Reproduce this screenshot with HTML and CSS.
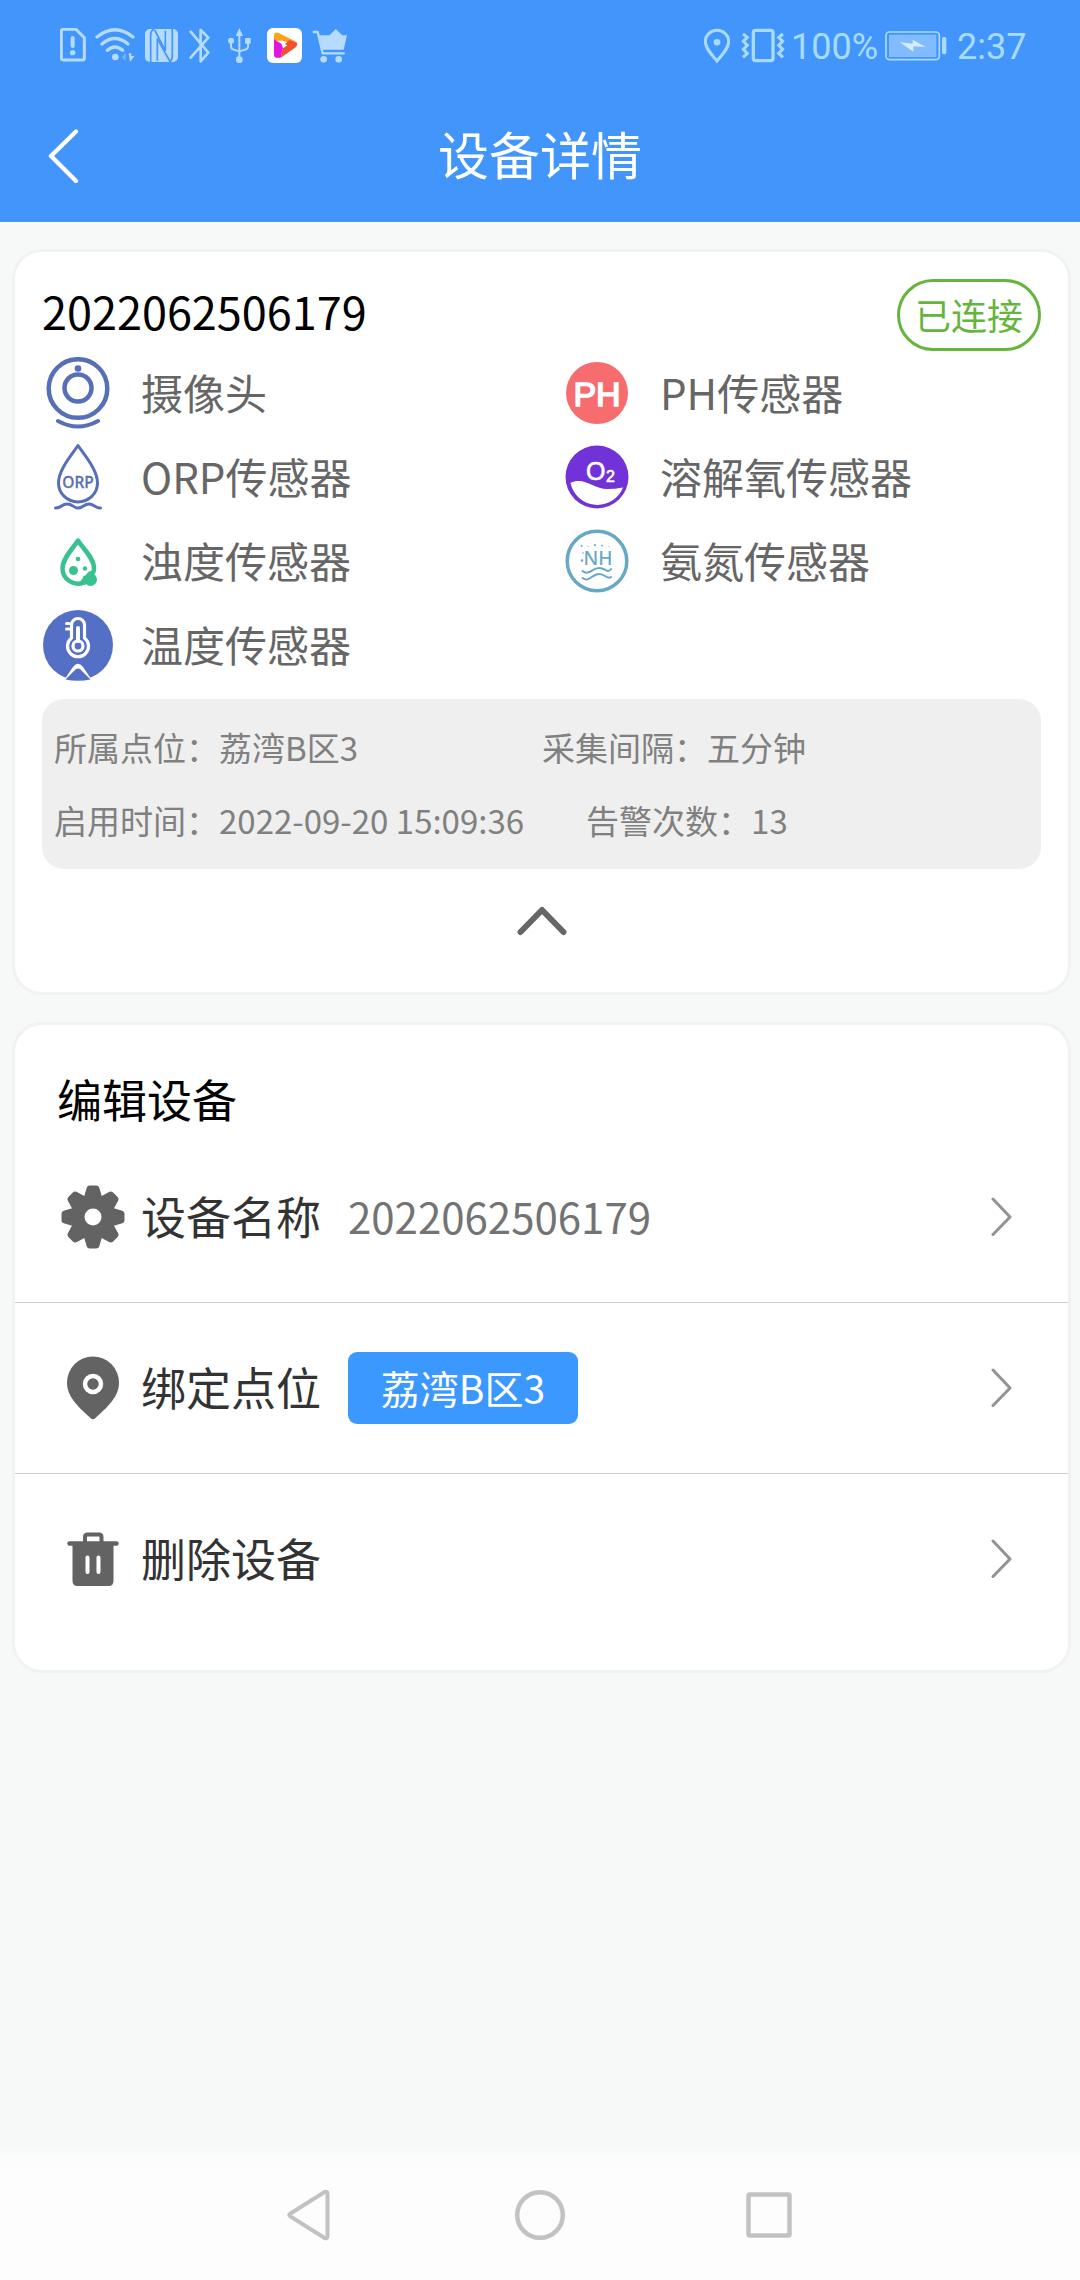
FILE: index.html
```html
<!DOCTYPE html>
<html lang="zh-CN">
<head>
<meta charset="utf-8">
<title>设备详情</title>
<link rel="stylesheet" href="styles.css">
</head>
<body>
<div class="screen">
  <header class="top">
    <div class="status">
      <svg class="st-sim" viewBox="60 54 78 108"><path d="M70 58H108L133 83V144Q133 150 127 150H70Q64 150 64 144V64Q64 58 70 58Z" fill="none" stroke="#b5dbff" stroke-width="9"/><path d="M98 84V108" stroke="#b5dbff" stroke-width="12" stroke-linecap="round"/><circle cx="98" cy="128" r="8" fill="#b5dbff"/></svg>
      <svg class="st-wifi" viewBox="166 54 120 108"><g fill="none" stroke="#b5dbff" stroke-width="10" stroke-linecap="round"><path d="M172 81Q226 38 280 81"/><path d="M187 102Q226 69 265 102"/><path d="M203 121Q226 101 249 121"/></g><circle cx="227" cy="141" r="10" fill="#b5dbff"/><path d="M258 128V154L246 141Z" fill="#6fb1fc"/><path d="M267 130H275V138H285L271 155Z" fill="#b5dbff"/></svg>
      <svg class="st-nfc" viewBox="315 54 99 108"><rect x="315" y="57" width="99" height="99" rx="15" fill="#b5dbff"/><g fill="none" stroke="#4296fb" stroke-width="5"><path d="M342 57Q332 62 332 76V156"/><path d="M352 152V86L389 153"/><path d="M344 60L376 122V62"/><path d="M397 57V138Q397 150 388 156"/></g></svg>
      <svg class="st-bt" viewBox="448 54 66 108"><path d="M453 65L506 128L483 154V60L506 83L453 143" fill="none" stroke="#b5dbff" stroke-width="8" stroke-linecap="round" stroke-linejoin="round"/></svg>
      <svg class="st-usb" viewBox="564 54 69 108"><path d="M598 72V148M573 95V109Q573 118 582 119L598 124L614 119Q624 118 624 109V95" fill="none" stroke="#b5dbff" stroke-width="6"/><path d="M598 54L609 78H587Z" fill="#b5dbff"/><circle cx="573" cy="92" r="9" fill="#b5dbff"/><rect x="615" y="84" width="17" height="17" rx="2" fill="#b5dbff"/><circle cx="598" cy="149" r="10" fill="#b5dbff"/></svg>
      <svg class="st-app" viewBox="681 54 105 108"><rect x="681" y="54" width="105" height="105" rx="18" fill="#fff"/><path d="M702 78Q702 64 716 69L764 93Q774 100 768 106L728 92L702 92Z" fill="#fca31d"/><path d="M771 98Q773 108 764 114L722 143L731 106L748 90Z" fill="#f2512f"/><path d="M702 88L731 106L722 143Q702 146 702 134Z" fill="#e314dc"/><path d="M723 97L742 106L729 115Z" fill="#fff"/></svg>
      <svg class="st-cart" viewBox="816 54 105 108"><path d="M818 66H833L848 130H914" fill="none" stroke="#b5dbff" stroke-width="7" stroke-linejoin="round"/><path d="M838 76H921L911 119H848ZM869 76L887 57L907 76Z" fill="#b5dbff"/><circle cx="851" cy="148" r="10" fill="#b5dbff"/><circle cx="896" cy="148" r="10" fill="#b5dbff"/></svg>
      <span class="spacer"></span>
      <svg class="st-loc" viewBox="42 54 78 108"><path d="M81 153C66 134 46 116 46 94A35 33 0 0 1 116 94C116 116 96 134 81 153Z" fill="none" stroke="#a9dbff" stroke-width="9"/><circle cx="81" cy="97" r="10" fill="#a9dbff"/></svg>
      <svg class="st-vib" viewBox="153 54 132 108"><rect x="190" y="61" width="59" height="91" rx="7" fill="none" stroke="#a9dbff" stroke-width="10"/><path d="M159 72L172 82L160 94L172 106L160 118L172 130L159 142M279 72L266 82L278 94L266 106L278 118L266 130L279 142" fill="none" stroke="#a9dbff" stroke-width="9"/></svg>
      <span class="st-text st-pct">100%</span>
      <svg class="st-bat" viewBox="585 54 186 108"><rect x="588" y="66" width="160" height="83" rx="10" fill="none" stroke="#a9dbff" stroke-width="5"/><rect x="597" y="74" width="142" height="67" fill="#80bcff"/><path d="M629 96L668 101V89L707 111L670 109V125Z" fill="#d9ecff"/><rect x="756" y="81" width="13" height="52" rx="5" fill="#a9dbff"/></svg>
      <span class="st-text st-time">2:37</span>
    </div>
    <div class="nav">
      <svg class="back" viewBox="0 0 32 54"><path d="M29 2.500L4 27L29 52" fill="none" stroke="#fff" stroke-width="4.300" stroke-linecap="round" stroke-linejoin="round"/></svg>
      <h1>设备详情</h1>
    </div>
  </header>

  <main>
    <section class="card">
      <div class="card-head">
        <h2>2022062506179</h2>
        <span class="badge">已连接</span>
      </div>
      <div class="sensors">
        <div class="sensor">
          <svg viewBox="0 0 72 72"><g fill="none" stroke="#566fb6" stroke-linecap="round"><circle cx="36" cy="31.500" r="29.300" stroke-width="4.500"/><circle cx="36" cy="31" r="13.500" stroke-width="4.500"/><path d="M16 64Q36 75 56 64" stroke-width="4"/></g><circle cx="36" cy="11.500" r="3.300" fill="#566fb6"/></svg>
          <span>摄像头</span>
        </div>
        <div class="sensor">
          <svg viewBox="0 0 72 72"><circle cx="36" cy="36" r="31" fill="#f66c6f"/><text x="36" y="48.500" class="ph">PH</text></svg>
          <span>PH传感器</span>
        </div>
        <div class="sensor">
          <svg viewBox="0 0 72 72"><g fill="none" stroke="#566fb6" stroke-width="3" stroke-linecap="round" stroke-linejoin="round"><path d="M36 4.500C29 15 16.500 29 16.500 42A19.500 19 0 0 0 55.500 42C55.500 29 43 15 36 4.500Z"/><path d="M13.500 67C20 67 19 63 25 63S31 67 36 67S42 63 47 63S53 67 58.500 67"/></g><text x="36" y="47" class="orp">ORP</text></svg>
          <span>ORP传感器</span>
        </div>
        <div class="sensor">
          <svg viewBox="0 0 72 72"><circle cx="36" cy="36" r="31.500" fill="#7132d8"/><path d="M9.500 42C22 35 33 48 46 48Q54 48 62 46.500A27.500 27.500 0 0 1 9.500 42Z" fill="#fff"/><text x="25" y="38.500" class="o2">O</text><text x="45" y="40.500" class="o2 sub">2</text></svg>
          <span>溶解氧传感器</span>
        </div>
        <div class="sensor">
          <svg viewBox="0 0 72 72"><path d="M36 15.500C31 23.500 20.500 33 20.500 43.500A15.500 15.500 0 0 0 42 57.500L43 53C46 54 46 48 50 48Q52 48 52 43C52 33 41 23.500 36 15.500Z" fill="none" stroke="#38c290" stroke-width="4.500" stroke-linejoin="round"/><g fill="#38c290"><circle cx="36" cy="34" r="2.300"/><circle cx="31.500" cy="45.500" r="4.500"/><circle cx="43" cy="43.500" r="2.200"/><circle cx="48.500" cy="54.500" r="6.500"/><circle cx="41.500" cy="57" r="3"/></g></svg>
          <span>浊度传感器</span>
        </div>
        <div class="sensor">
          <svg viewBox="0 0 72 72"><circle cx="36" cy="36" r="29.800" fill="none" stroke="#67a8c5" stroke-width="3.500"/><text x="37" y="40" class="nh">NH</text><g fill="none" stroke="#67a8c5" stroke-width="2" stroke-linecap="round"><path d="M21.500 46C28 51 31 43 38 43S46 49 50 44"/><path d="M21.500 53C28 58 31 49 38 49S46 55 50 52"/></g><g fill="#67a8c5"><circle cx="20.500" cy="21" r="1"/><circle cx="27" cy="21.500" r=".6"/><circle cx="34" cy="20" r="1.100"/><circle cx="41" cy="20.500" r=".9"/><circle cx="48" cy="21.500" r=".6"/><circle cx="21" cy="35.500" r="1.300"/><circle cx="22" cy="28" r=".8"/></g></svg>
          <span>氨氮传感器</span>
        </div>
        <div class="sensor">
          <svg viewBox="0 0 72 72"><circle cx="36" cy="36" r="35" fill="#536fc6"/><path d="M20 74L31 58Q36 51.500 41 58L52 74Z" fill="#fff"/><path d="M23.500 70.500L33.500 60.500Q36 58.500 38.500 60.500L48.500 70.500Q36 73 23.500 70.500Z" fill="#536fc6"/><path d="M29.500 29V16A6.500 6.500 0 0 1 42.500 16V29A10.500 10.500 0 1 1 29.500 29Z" fill="none" stroke="#fff" stroke-width="3.200"/><circle cx="36" cy="37" r="5" fill="none" stroke="#fff" stroke-width="3.200"/><path d="M36 32V19" stroke="#fff" stroke-width="4" stroke-linecap="round"/><path d="M24.500 14.500H27M24.500 20H27" stroke="#fff" stroke-width="3" stroke-linecap="round"/></svg>
          <span>温度传感器</span>
        </div>
      </div>
      <div class="info">
        <div class="info-row"><span class="place">所属点位：荔湾B区3</span><span>采集间隔：五分钟</span></div>
        <div class="info-row"><span class="start">启用时间：2022-09-20 15:09:36</span><span>告警次数：13</span></div>
      </div>
      <div class="collapse">
        <svg viewBox="0 0 50 30"><path d="M3.500 26L25 4L46.500 26" fill="none" stroke="#666" stroke-width="6" stroke-linecap="round" stroke-linejoin="round"/></svg>
      </div>
    </section>

    <section class="card edit">
      <h3>编辑设备</h3>
      <div class="row">
        <svg class="ic" viewBox="-33 -33 66 66"><defs><path id="tooth" d="M-9 -20L-6.500 -28.500Q-6 -31.500 -3 -31.500H3Q6 -31.500 6.500 -28.500L9 -20Z"/></defs><g fill="#636363"><use href="#tooth"/><use href="#tooth" transform="rotate(45)"/><use href="#tooth" transform="rotate(90)"/><use href="#tooth" transform="rotate(135)"/><use href="#tooth" transform="rotate(180)"/><use href="#tooth" transform="rotate(225)"/><use href="#tooth" transform="rotate(270)"/><use href="#tooth" transform="rotate(315)"/><circle r="22.500"/></g><circle r="8.500" fill="#fff"/></svg>
        <span class="label">设备名称</span>
        <span class="value">2022062506179</span>
        <svg class="go" viewBox="0 0 22 40"><path d="M2 2L19 20L2 37.500" fill="none" stroke="#939393" stroke-width="3" stroke-linecap="round" stroke-linejoin="round"/></svg>
      </div>
      <div class="row">
        <svg class="ic" viewBox="0 0 66 66"><path d="M33 1.500A26 26 0 0 1 59 28C59 43 45 54 35.500 63Q33 65.500 30.500 63C21 54 7 43 7 28A26 26 0 0 1 33 1.500Z" fill="#636363"/><circle cx="33" cy="29" r="8" fill="none" stroke="#fff" stroke-width="4.500"/></svg>
        <span class="label">绑定点位</span>
        <span class="chip">荔湾B区3</span>
        <svg class="go" viewBox="0 0 22 40"><path d="M2 2L19 20L2 37.500" fill="none" stroke="#939393" stroke-width="3" stroke-linecap="round" stroke-linejoin="round"/></svg>
      </div>
      <div class="row">
        <svg class="ic" viewBox="0 0 66 66"><path d="M25 17V11Q25 8.500 27.500 8.500H39Q41.500 8.500 41.500 11V17" fill="none" stroke="#636363" stroke-width="4"/><path d="M9.500 17.500H56.500" stroke="#636363" stroke-width="4.500" stroke-linecap="round"/><path d="M12.500 17H53.500V55Q53.500 60 48.500 60H17.500Q12.500 60 12.500 55Z" fill="#636363"/><path d="M27.500 31.500V46M38.500 31.500V46" stroke="#fff" stroke-width="4" stroke-linecap="round"/></svg>
        <span class="label">删除设备</span>
        <svg class="go" viewBox="0 0 22 40"><path d="M2 2L19 20L2 37.500" fill="none" stroke="#939393" stroke-width="3" stroke-linecap="round" stroke-linejoin="round"/></svg>
      </div>
    </section>
  </main>

  <footer class="sysnav">
    <svg viewBox="0 0 52 52"><path d="M5.500 24.500L39.500 3Q42.500 2 42.500 5V47Q42.500 50 39.500 49L5.500 27.500Q3 26 5.500 24.500Z" fill="none" stroke="#c2c2c2" stroke-width="4"/></svg>
    <svg viewBox="0 0 52 52"><circle cx="26" cy="26" r="22.800" fill="none" stroke="#c2c2c2" stroke-width="4.500"/></svg>
    <svg viewBox="0 0 52 52"><rect x="5.500" y="5.500" width="41" height="41" rx="1.500" fill="none" stroke="#c2c2c2" stroke-width="4.500"/></svg>
  </footer>
</div>
</body>
</html>
```
FILE: styles.css
```css
* { box-sizing: border-box; margin: 0; padding: 0; }
body {
  width: 1080px;
  background: #f7f9f9;
  font-family: "Noto Sans CJK SC", sans-serif;
  font-weight: 400;
}
h1, h2, h3 { font-weight: 400; }
svg { display: block; flex: none; }
.screen { display: flex; flex-direction: column; width: 1080px; height: 2280px; }

/* status bar and page title */
.top { height: 222px; background: #4296fb; }
.status { display: flex; align-items: flex-start; height: 90px; padding: 28px 0 0 60px; }
.status svg { height: 36px; }
.st-sim { width: 26px; }
.st-wifi { width: 40px; margin-left: 9px; }
.st-nfc { width: 33px; margin-left: 10px; }
.st-bt { width: 22px; margin-left: 11px; }
.st-usb { width: 23px; margin-left: 17px; }
.st-app { width: 35px; margin-left: 16px; }
.st-cart { width: 35px; margin-left: 10px; }
.spacer { flex: 1; }
.st-loc { width: 26px; }
.st-vib { width: 44px; margin-left: 11px; }
.st-bat { width: 62px; }
.st-text { font-family: Roboto, sans-serif; font-size: 36px; line-height: 38px; color: #a9dbff; white-space: nowrap; }
.st-pct { width: 100px; padding-left: 6px; }
.st-time { width: 133px; padding-left: 10px; }
.nav { display: grid; grid-template-columns: 80px 1fr 80px; align-items: center; height: 132px; }
.back { width: 32px; height: 54px; margin-left: 47px; }
.nav h1 { text-align: center; font-size: 51px; line-height: 60px; color: #fff; padding-bottom: 6px; }

/* cards */
main { flex: 1; display: flex; flex-direction: column; gap: 27px; padding: 27px 9px 0 12px; }
.card { height: 746px; padding: 27px; background: #fff; border: 3px solid #f1f2f2; border-radius: 30px; }
.card-head { display: flex; justify-content: space-between; align-items: flex-start; height: 72px; }
.card-head h2 { font-size: 45px; line-height: 63px; color: #000; }
.badge { width: 144px; height: 72px; border: 3px solid #64b53d; border-radius: 36px; color: #64b53d; font-size: 36px; line-height: 65px; text-align: center; }
.sensors { display: grid; grid-template-columns: 519px 1fr; grid-auto-rows: 84px; }
.sensor { display: flex; align-items: center; gap: 27px; color: #666; font-size: 42px; line-height: 60px; white-space: nowrap; }
.sensor svg { width: 72px; height: 72px; }
.sensor span { padding-bottom: 3px; }
.sensor text { font-family: "Liberation Sans", sans-serif; }
.sensor .ph { font-size: 34px; fill: #fff; stroke: #fff; stroke-width: 1.6px; text-anchor: middle; }
.sensor .orp { font-family: "Noto Sans", sans-serif; font-size: 15.5px; font-weight: 500; fill: #566fb6; stroke: #566fb6; stroke-width: .3px; text-anchor: middle; }
.sensor .o2 { font-size: 25px; fill: #fff; stroke: #fff; stroke-width: .6px; }
.sensor .sub { font-size: 16px; }
.sensor .nh { font-family: "Noto Sans", sans-serif; font-size: 19px; font-weight: 500; fill: #67a8c5; text-anchor: middle; }
.info { height: 170px; margin-top: 12px; padding: 12px; background: #efefef; border-radius: 22px; }
.info-row { display: flex; font-size: 33px; line-height: 73px; color: #808080; white-space: nowrap; }
.place { width: 488px; }
.start { margin-right: 62px; }
.collapse { display: flex; justify-content: center; padding-top: 37px; }
.collapse svg { width: 50px; height: 30px; }

.edit { height: 651px; padding: 40px 0 25px; }
.edit h3 { height: 67px; padding-left: 42px; font-size: 45px; line-height: 67px; color: #000; }
.row { display: flex; align-items: center; height: 171px; padding: 0 55px 0 45px; border-bottom: 1px solid #cfcfcf; white-space: nowrap; }
.row:last-child { border-bottom-color: transparent; }
.ic { width: 66px; height: 66px; }
.label { width: 180px; margin-left: 15px; font-size: 45px; line-height: 64px; color: #333; padding-bottom: 3px; }
.value { margin-left: 27px; font-size: 42px; line-height: 60px; color: #737373; padding-bottom: 3px; }
.chip { width: 230px; height: 72px; margin-left: 27px; border-radius: 9px; background: #3a98ff; color: #fff; font-size: 39px; line-height: 70px; text-align: center; }
.go { width: 22px; height: 40px; margin-left: auto; }

/* system navigation */
.sysnav { display: flex; justify-content: center; gap: 177px; height: 132px; padding-top: 41px; background: linear-gradient(#f8faf9, #fdfdfd 24px); }
.sysnav svg { width: 52px; height: 52px; }
```
